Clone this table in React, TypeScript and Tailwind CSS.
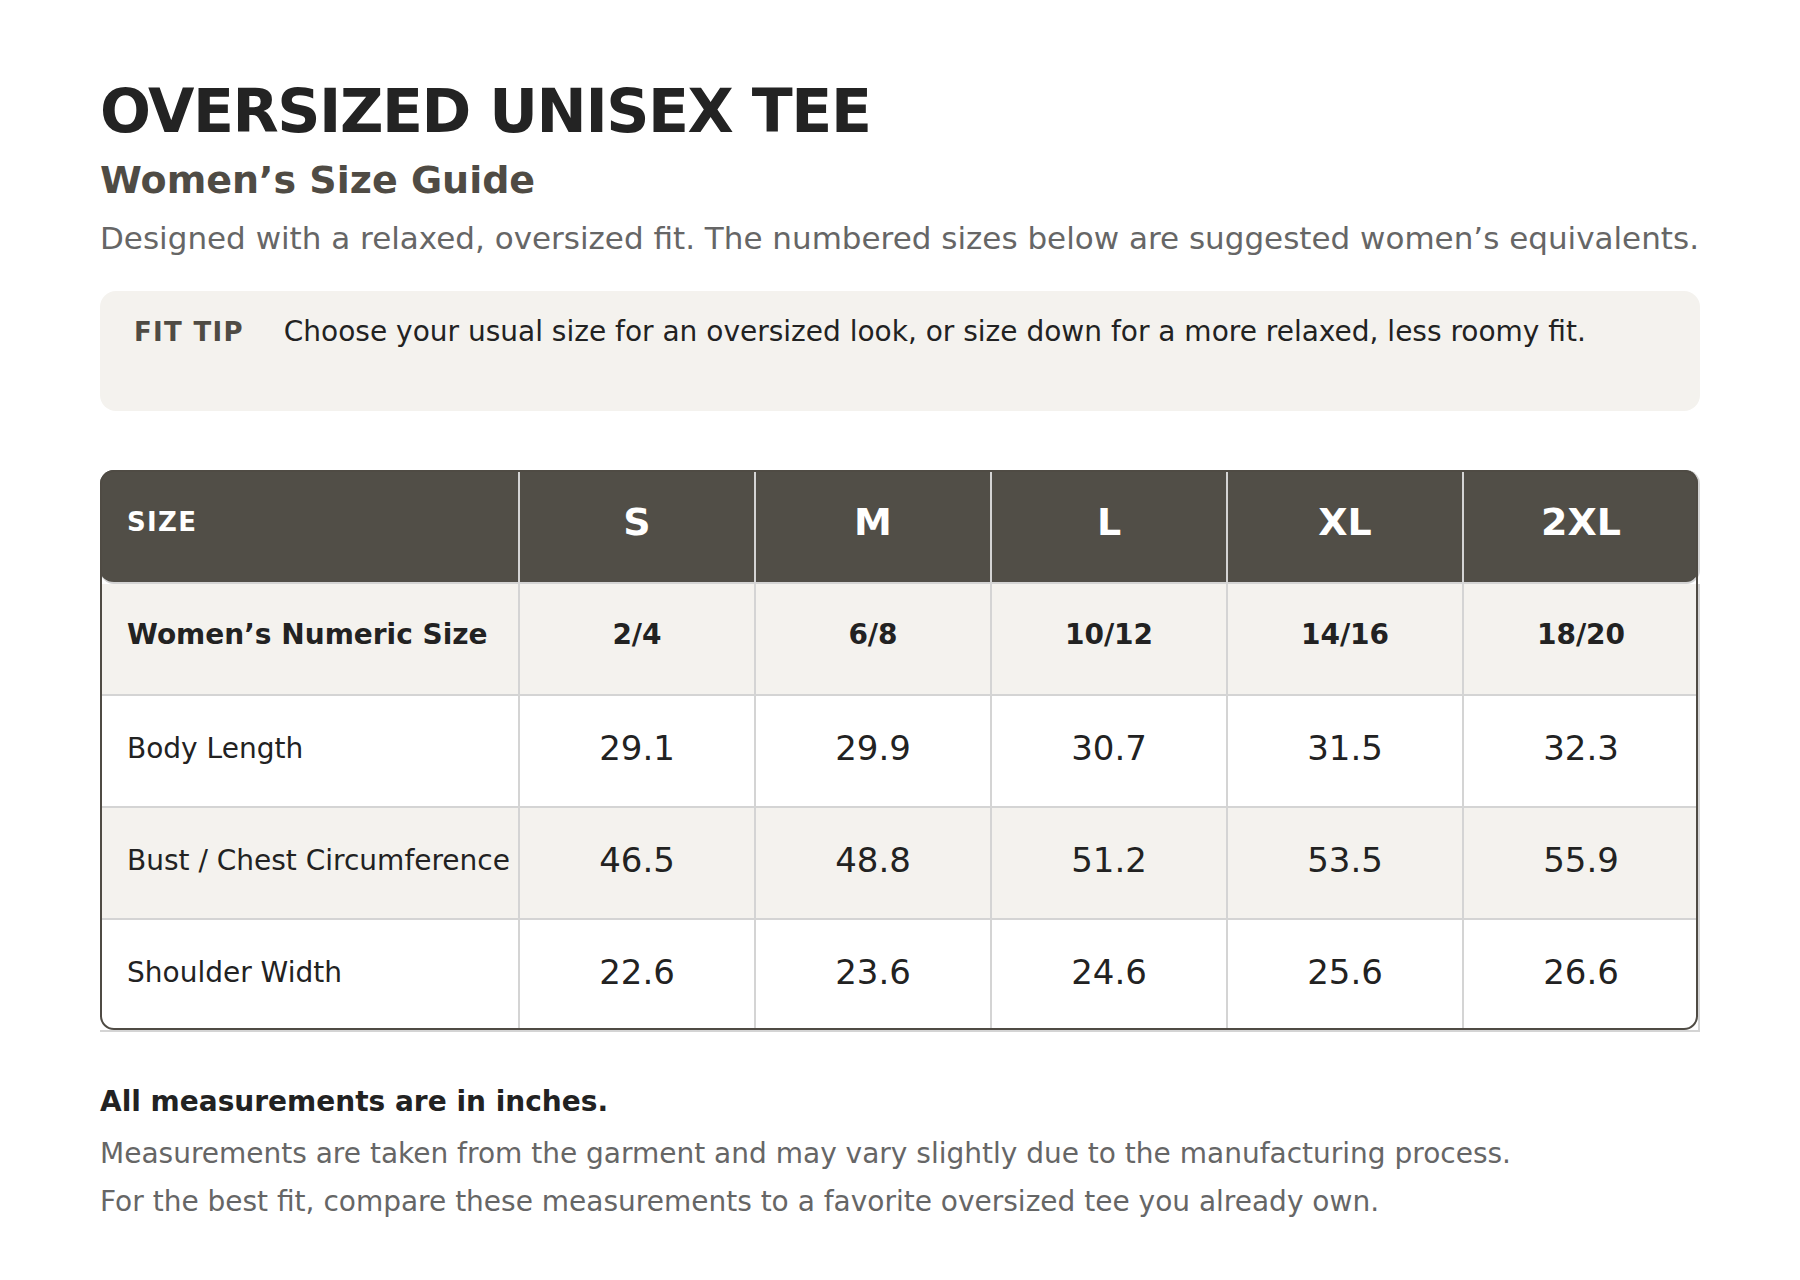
import React from "react";

const sizes = ["S", "M", "L", "XL", "2XL"];
const numeric = ["2/4", "6/8", "10/12", "14/16", "18/20"];

const rows = [
  { label: "Body Length", values: ["29.1", "29.9", "30.7", "31.5", "32.3"], alt: false },
  { label: "Bust / Chest Circumference", values: ["46.5", "48.8", "51.2", "53.5", "55.9"], alt: true },
  { label: "Shoulder Width", values: ["22.6", "23.6", "24.6", "25.6", "26.6"], alt: false },
];

const cell = "border-r-2 border-b-2 border-[#d4d4d4] flex items-center";

export default function App() {
  return (
    <div className="min-h-screen bg-white px-[100px] pt-[78px] font-['DejaVu_Sans','Liberation_Sans',sans-serif] text-[#222]">
      {/* Heading */}
      <h1 className="text-[60px] font-bold leading-[66px] tracking-[-0.024em] text-[#232323]">
        OVERSIZED UNISEX TEE
      </h1>
      <h2 className="mt-[12px] text-[38px] font-bold leading-[49px] text-[#4f4b44]">
        Women’s Size Guide
      </h2>
      <p className="mt-[10px] whitespace-nowrap text-[31px] leading-[46px] text-[#666]">
        Designed with a relaxed, oversized fit. The numbered sizes below are suggested women’s equivalents.
      </p>

      {/* Fit tip */}
      <div className="mt-[30px] flex h-[120px] items-start gap-[40px] rounded-[16px] bg-[#f4f2ee] px-[34px] pt-[20px]">
        <span className="text-[26px] font-bold leading-[42px] tracking-wider text-[#4f4b44]">FIT TIP</span>
        <span className="text-[28px] leading-[42px] text-[#222]">
          Choose your usual size for an oversized look, or size down for a more relaxed, less roomy fit.
        </span>
      </div>

      {/* Size table */}
      <div className="relative mt-[59px] w-[1600px]">
        <div className="grid grid-cols-[420px_repeat(5,1fr)]">
          <div className={`${cell} h-[114px] pb-[7px] rounded-l-[14px] bg-[#514e47] pl-[27px] text-[26px] font-bold tracking-wider text-white`}>
            SIZE
          </div>
          {sizes.map((s, i) => (
            <div
              key={s}
              className={`${cell} h-[114px] pb-[7px] justify-center bg-[#514e47] text-[38px] font-bold text-white ${i === sizes.length - 1 ? "rounded-r-[14px]" : ""}`}
            >
              {s}
            </div>
          ))}

          <div className={`${cell} h-[112px] pb-[8px] bg-[#f4f2ee] pl-[27px] text-[28px] font-bold whitespace-nowrap`}>
            Women’s Numeric Size
          </div>
          {numeric.map((n) => (
            <div key={n} className={`${cell} h-[112px] pb-[8px] justify-center bg-[#f4f2ee] text-[28px] font-bold`}>
              {n}
            </div>
          ))}

          {rows.map((r) => (
            <React.Fragment key={r.label}>
              <div className={`${cell} h-[112px] pb-[5px] ${r.alt ? "bg-[#f4f2ee]" : "bg-white"} pl-[27px] text-[28px] whitespace-nowrap`}>
                {r.label}
              </div>
              {r.values.map((v, i) => (
                <div key={i} className={`${cell} h-[112px] pb-[5px] justify-center ${r.alt ? "bg-[#f4f2ee]" : "bg-white"} text-[34px]`}>
                  {v}
                </div>
              ))}
            </React.Fragment>
          ))}
        </div>
        {/* dark rounded outline drawn over the grid */}
        <div className="pointer-events-none absolute top-0 left-0 right-[2px] bottom-[2px] rounded-[14px] border-2 border-[#4f4b44]" />
      </div>

      {/* Notes */}
      <p className="mt-[49px] text-[28px] font-bold leading-[42px] text-[#222]">All measurements are in inches.</p>
      <div className="mt-[7px] text-[28px] leading-[48px] text-[#666]">
        <p>Measurements are taken from the garment and may vary slightly due to the manufacturing process.</p>
        <p>For the best fit, compare these measurements to a favorite oversized tee you already own.</p>
      </div>
    </div>
  );
}
